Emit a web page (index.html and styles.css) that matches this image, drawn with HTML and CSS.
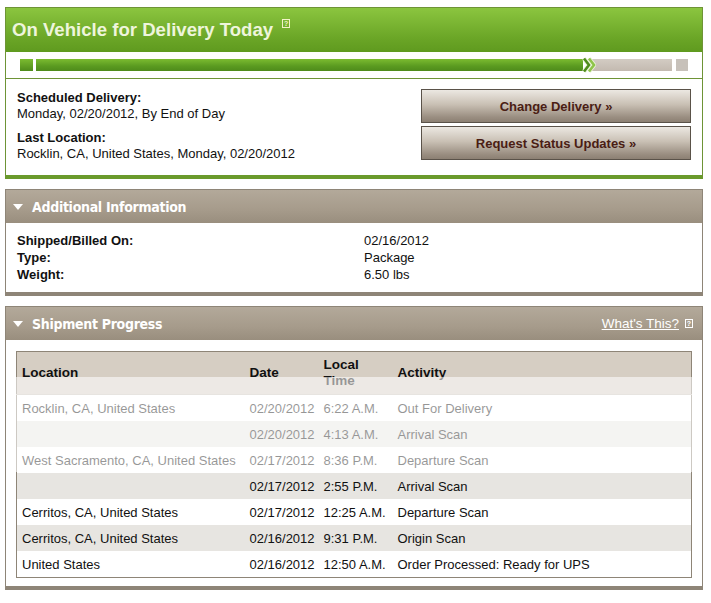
FILE: index.html
```html
<!DOCTYPE html>
<html>
<head>
<meta charset="utf-8">
<link rel="stylesheet" href="styles.css">
</head>
<body>
<div class="page">
  <section class="panel panel-green">
    <div class="green-head">
      <h1>On Vehicle for Delivery Today</h1>
      <span class="help help-light">?</span>
    </div>
    <div class="progress">
      <div class="seg seg-start"></div>
      <div class="seg seg-done"></div>
      <svg class="chev" width="14" height="16" viewBox="0 0 14 16">
        <polyline points="2,1.5 7,8 2,14.5" fill="none" stroke="#e9f3d8" stroke-width="4.5"/>
        <polyline points="7,1.5 12,8 7,14.5" fill="none" stroke="#e9f3d8" stroke-width="4.5"/>
        <polyline points="2,1.5 7,8 2,14.5" fill="none" stroke="#4f8c1c" stroke-width="2.6"/>
        <polyline points="7,1.5 12,8 7,14.5" fill="none" stroke="#8fc44a" stroke-width="2.6"/>
      </svg>
      <div class="seg seg-todo"></div>
      <div class="seg seg-end"></div>
    </div>
    <div class="summary">
      <div class="facts">
        <div class="fact">
          <div class="label">Scheduled Delivery:</div>
          <div>Monday, 02/20/2012, By End of Day</div>
        </div>
        <div class="fact">
          <div class="label">Last Location:</div>
          <div>Rocklin, CA, United States, Monday, 02/20/2012</div>
        </div>
      </div>
      <div class="buttons">
        <div class="btn">Change Delivery »</div>
        <div class="btn">Request Status Updates »</div>
      </div>
    </div>
  </section>

  <section class="panel panel-gray">
    <div class="gray-head">
      <span class="tri"></span>
      <span class="head-title">Additional Information</span>
    </div>
    <div class="info">
      <div class="info-row"><span class="label info-key">Shipped/Billed On:</span><span>02/16/2012</span></div>
      <div class="info-row"><span class="label info-key">Type:</span><span>Package</span></div>
      <div class="info-row"><span class="label info-key">Weight:</span><span>6.50 lbs</span></div>
    </div>
  </section>

  <section class="panel panel-gray">
    <div class="gray-head">
      <span class="tri"></span>
      <span class="head-title">Shipment Progress</span>
      <span class="whats">What's This?</span>
      <span class="help help-light">?</span>
    </div>
    <div class="progress-body">
      <table class="track">
        <colgroup>
          <col class="c-loc">
          <col class="c-date">
          <col class="c-time">
          <col>
        </colgroup>
        <thead>
          <tr>
            <th>Location</th>
            <th>Date</th>
            <th>Local<br>Time</th>
            <th>Activity</th>
          </tr>
        </thead>
        <tbody>
          <tr><td>Rocklin, CA, United States</td><td>02/20/2012</td><td>6:22 A.M.</td><td>Out For Delivery</td></tr>
          <tr class="alt"><td></td><td>02/20/2012</td><td>4:13 A.M.</td><td>Arrival Scan</td></tr>
          <tr><td>West Sacramento, CA, United States</td><td>02/17/2012</td><td>8:36 P.M.</td><td>Departure Scan</td></tr>
          <tr class="alt"><td></td><td>02/17/2012</td><td>2:55 P.M.</td><td>Arrival Scan</td></tr>
          <tr><td>Cerritos, CA, United States</td><td>02/17/2012</td><td>12:25 A.M.</td><td>Departure Scan</td></tr>
          <tr class="alt"><td>Cerritos, CA, United States</td><td>02/16/2012</td><td>9:31 P.M.</td><td>Origin Scan</td></tr>
          <tr><td>United States</td><td>02/16/2012</td><td>12:50 A.M.</td><td>Order Processed: Ready for UPS</td></tr>
        </tbody>
      </table>
    </div>
  </section>
</div>
<div class="wash"></div>
</body>
</html>
```

FILE: styles.css
```css
html, body {
  margin: 0;
  padding: 0;
  background: #ffffff;
}
body {
  font-family: "Liberation Sans", Arial, sans-serif;
  font-size: 13px;
  color: #111;
  position: relative;
}
.page {
  padding: 7px 0 0 5px;
  width: 698px;
  display: flex;
  flex-direction: column;
  gap: 10px;
}
.panel {
  box-sizing: border-box;
}
.panel-green {
  border: 1px solid #6e9436;
  border-bottom: 4px solid #6a9a2c;
}
.green-head {
  height: 44px;
  background: linear-gradient(#8bc53f, #6aa526 70%, #5f9a1f);
  display: flex;
  align-items: center;
  padding-left: 6px;
}
.green-head h1 {
  margin: 0;
  font-size: 18.6px;
  font-weight: bold;
  color: #eef5dc;
}
.help {
  display: inline-block;
  width: 6px;
  height: 7px;
  border: 1px solid #fff;
  font-size: 7px;
  line-height: 7px;
  text-align: center;
  color: #fff;
  font-weight: bold;
}
.green-head .help {
  border-color: #f3f3c8;
  color: #f3f3c8;
  margin-left: 9px;
  align-self: flex-start;
  margin-top: 11px;
}
.progress {
  height: 26px;
  border-bottom: 1px solid #6e9436;
  display: flex;
  align-items: center;
  padding-left: 14px;
}
.seg {
  height: 12px;
}
.seg-start {
  width: 13px;
  background: linear-gradient(#7bbb30, #4f8b1b);
}
.seg-done {
  margin-left: 3px;
  width: 547px;
  background: linear-gradient(#7bbb30, #5a9a20 60%, #4f8b1b);
}
.chev {
  margin-left: -1px;
  margin-right: -4px;
  position: relative;
  z-index: 1;
}
.seg-todo {
  width: 80px;
  background: linear-gradient(#d3ccc3, #c3bab0);
}
.seg-end {
  width: 12px;
  margin-left: 4px;
  background: #c7c1ba;
}
.summary {
  display: flex;
  justify-content: space-between;
  padding: 10px 11px 13px 11px;
}
.facts {
  display: flex;
  flex-direction: column;
  gap: 8px;
  padding-top: 1px;
  line-height: 16px;
}
.label {
  font-weight: bold;
}
.buttons {
  display: flex;
  flex-direction: column;
  gap: 3px;
}
.btn {
  box-sizing: border-box;
  width: 270px;
  height: 34px;
  border: 1px solid #5a5249;
  background: linear-gradient(#ece8e2, #c9c0b4 45%, #9a8e81 85%, #8c8073);
  color: #4a1d14;
  font-weight: bold;
  font-size: 13px;
  display: flex;
  align-items: center;
  justify-content: center;
}
.panel-gray {
  border: 1px solid #8e8577;
  border-bottom: 4px solid #8e8577;
}
.gray-head {
  height: 33px;
  background: linear-gradient(#b3a99a, #a69b8b 60%, #998e7e);
  display: flex;
  align-items: center;
  padding-left: 7px;
  color: #fff;
}
.tri {
  width: 0;
  height: 0;
  border-left: 5px solid transparent;
  border-right: 5px solid transparent;
  border-top: 6px solid #fff;
  margin-right: 9px;
}
.head-title {
  font-family: "DejaVu Sans Condensed", "DejaVu Sans", sans-serif;
  font-stretch: condensed;
  font-weight: bold;
  font-size: 14px;
  letter-spacing: -0.3px;
}
.whats {
  margin-left: auto;
  text-decoration: underline;
  font-size: 13.5px;
  color: #fff;
}
.gray-head .help {
  margin-left: 6px;
  margin-right: 9px;
}
.info {
  padding: 9px 11px 9px;
  line-height: 17px;
}
.info-row {
  display: flex;
}
.info-key {
  width: 347px;
}
.progress-body {
  padding: 11px 10px 8px 10px;
}
.track {
  width: 100%;
  table-layout: fixed;
  border-collapse: collapse;
  border: 1px solid #8e8577;
}
.c-loc { width: 228px; }
.c-date { width: 74px; }
.c-time { width: 74px; }
.track th {
  background: #d6cec3;
  text-align: left;
  font-weight: bold;
  font-size: 13.5px;
  height: 42px;
  padding: 0 5px;
  line-height: 16px;
  vertical-align: middle;
  border-bottom: 1px solid #c8c2b8;
}
.track td {
  height: 26px;
  padding: 0 5px;
  white-space: nowrap;
}
.track tr.alt td {
  background: #e7e5e1;
}
.wash {
  position: absolute;
  left: 10px;
  top: 377px;
  width: 692px;
  height: 95px;
  background: rgba(255, 255, 255, 0.56);
  pointer-events: none;
}
```
